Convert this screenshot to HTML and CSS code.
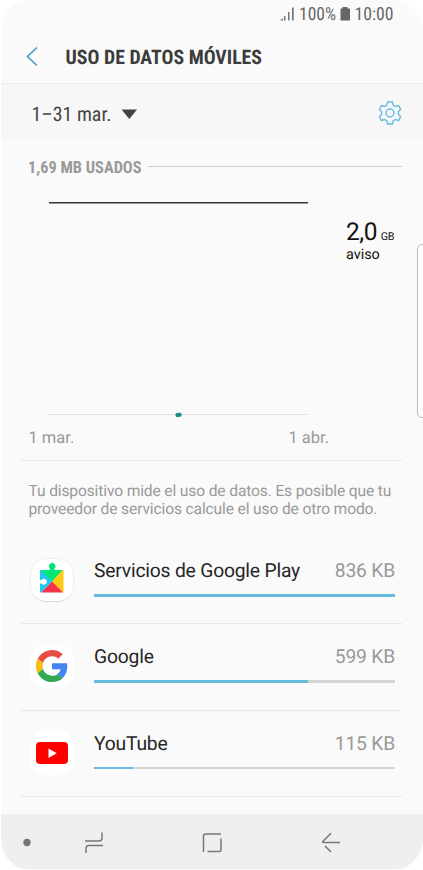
FILE: index.html
```html
<!DOCTYPE html>
<html lang="es">
<head>
<meta charset="utf-8">
<title>Uso de datos móviles</title>
<link rel="stylesheet" href="styles.css">
</head>
<body>
<main class="screen">
  <header class="top">
    <svg class="status" width="423" height="30">
      <path class="signal" d="M280 20.500l3-2.500v2.500zM284 16h1.500v4.500H284zM288 12h1.500v8.500H288zM292 7.500h1.700v13H292z"/>
      <text class="cond" x="299" y="20.300" textLength="37" lengthAdjust="spacingAndGlyphs">100%</text>
      <path class="battery" d="M340.500 8.500h2V7h5v1.500h2.500V20.500h-9.500z"/>
      <text class="cond" x="354.500" y="20.300" textLength="39" lengthAdjust="spacingAndGlyphs">10:00</text>
    </svg>
    <svg class="titlebar" width="423" height="53">
      <path class="back" d="M37 17.500L27.500 26.500L37 35.500"/>
      <text class="cond title" x="65.500" y="34" textLength="196.500" lengthAdjust="spacingAndGlyphs">USO DE DATOS MÓVILES</text>
    </svg>
  </header>
  <section class="period">
    <svg width="423" height="56">
      <text class="cond date" x="31.500" y="37" textLength="80" lengthAdjust="spacingAndGlyphs">1–31 mar.</text>
      <path class="caret" d="M121.500 25.500h15.500L129.300 35z"/>
      <g class="gear" transform="translate(390 29)">
        <circle r="4"/>
        <path d="M-2.500-11h5l.8 3.300 2.200 1.200 3.200-1 1.900 3.700-2.200 2.500v2.600l2.200 2.500-1.900 3.700-3.200-1-2.200 1.200-.8 3.300h-5l-.8-3.300-2.200-1.200-3.200 1-1.900-3.700 2.200-2.500v-2.600l-2.200-2.500 1.900-3.700 3.200 1 2.200-1.200z"/>
      </g>
    </svg>
  </section>
  <section class="usage">
    <div class="used">
      <svg width="120" height="24"><text class="cond" x="0" y="18.300" textLength="113.500" lengthAdjust="spacingAndGlyphs">1,69 MB USADOS</text></svg>
      <i></i>
    </div>
    <div class="chart">
      <svg class="plot" width="260" height="218">
        <path class="limit" d="M0 3.700h259"/>
        <path class="axis" d="M0 215.500h259"/>
        <rect class="point" x="126.500" y="213.800" width="6" height="4" rx="1.500" transform="rotate(-7 130 216)"/>
      </svg>
      <div class="warning"><div class="amount">2,0<small>GB</small></div><div>aviso</div></div>
    </div>
    <div class="dates"><span>1 mar.</span><span>1 abr.</span></div>
  </section>
  <p class="note">Tu dispositivo mide el uso de datos. Es posible que tu<br>proveedor de servicios calcule el uso de otro modo.</p>
  <ul class="apps">
    <li>
      <div class="icon outlined">
        <svg width="42" height="42" viewBox="0 0 42 42">
          <path fill="#00e676" d="M9 12.500q0-1.500 1.500-1.500h8.500V9.500a3.200 3.200 0 1 1 4.500 0V11H31q1.500 0 1.500 1.500L21 23z"/>
          <path fill="#ffca14" d="M31.500 11q1 0 1 1v20.500q0 1-1 1L21 22.500z"/>
          <path fill="#f43249" d="M32 33.500H10L21 22.500z"/>
          <path fill="#20c8ef" d="M10 11L21 22.500L10 33.500q-1 0-1-1V12q0-1 1-1z"/>
          <path fill="#fff" d="M8.500 20.900h2.100a2.900 2.900 0 1 1 0 3.700H8.500z"/>
        </svg>
      </div>
      <div class="info"><div class="line"><span class="long">Servicios de Google Play</span><b>836 KB</b></div><div class="bar"><i style="width:100%"></i></div></div>
    </li>
    <li>
      <div class="icon">
        <svg width="32" height="32" viewBox="0 0 48 48">
          <path fill="#e65044" d="M24 9.500c3.500 0 6.700 1.200 9.200 3.600l6.900-6.900C35.900 2.400 30.500 0 24 0 14.600 0 6.500 5.400 2.600 13.200l8 6.200C12.400 13.700 17.700 9.500 24 9.500z"/>
          <path fill="#4285f4" d="M47 24.500c0-1.600-.2-3.100-.4-4.500H24v9h12.900c-.6 3-2.300 5.500-4.800 7.200l7.700 6C44.400 38 47 31.800 47 24.500z"/>
          <path fill="#fbbc12" d="M10.500 28.600a14 14 0 0 1 0-9.200l-8-6.200a24 24 0 0 0 0 21.600z"/>
          <path fill="#34a853" d="M24 48c6.500 0 11.900-2.100 15.900-5.800l-7.700-6C30 37.700 27.200 38.500 24 38.500c-6.300 0-11.600-4.200-13.500-9.900l-8 6.200C6.500 42.600 14.600 48 24 48z"/>
        </svg>
      </div>
      <div class="info"><div class="line"><span>Google</span><b>599 KB</b></div><div class="bar"><i style="width:71.200%"></i></div></div>
    </li>
    <li>
      <div class="icon">
        <svg width="32" height="22" viewBox="0 0 32 22"><rect width="32" height="22" rx="4" fill="#f00"/><path fill="#fff" d="M12.500 6.500l8.300 4.700-8.300 4.700z"/></svg>
      </div>
      <div class="info"><div class="line"><span>YouTube</span><b>115 KB</b></div><div class="bar"><i style="width:13%"></i></div></div>
    </li>
  </ul>
  <nav class="nav">
    <svg width="423" height="56">
      <circle cx="27" cy="28.500" r="3.700"/>
      <path d="M85 27h14q3 0 3-3v-5.500M103 31.500H89q-3 0-3 3V39"/>
      <path d="M221 20h-15.500q-2 0-2 2v16M207.500 37.500H219q2 0 2-2V24.500"/>
      <path d="M340 28.500h-16.500q-1.500 0-.5-1.200l8-8M325 32l6 6"/>
    </svg>
  </nav>
  <div class="edge"></div>
</main>
</body>
</html>
```

FILE: styles.css
```css
* { box-sizing: border-box; }
body { margin: 0; background: #fff; font-family: Roboto, sans-serif; text-rendering: geometricPrecision; }
svg { display: block; flex-shrink: 0; }
.screen { position: relative; width: 423px; height: 870px; padding: 0 0 1px 0; background: #fafafa; border-radius: 31px; overflow: hidden; border-left: 1px solid #fff; display: flex; flex-direction: column; }
.top, .period, .nav { margin-left: -1px; }
.top { height: 84px; border-bottom: 1px solid #ececec; }
.cond { font-family: "Roboto Condensed", Roboto, sans-serif; font-stretch: condensed; }
.status text { font-size: 18px; fill: #666; }
.signal { fill: #777; }
.battery { fill: #666; }
.back { fill: none; stroke: #4c9fc2; stroke-width: 1.7; }
.title { font-size: 20px; font-weight: 700; fill: #3c3c3c; }
.period { height: 56px; background: #f7f7f7; }
.date { font-size: 20px; fill: #444; }
.caret { fill: #444; }
.gear { fill: none; stroke: #66bce0; stroke-width: 1.4; stroke-linejoin: round; }
.usage { height: 321px; margin: 0 21px 0 20px; padding-top: 15px; border-bottom: 1px solid #e8e8e8; }
.used { display: flex; padding-left: 7px; height: 24px; }
.used text { font-size: 16.8px; font-weight: 700; fill: #999; }
.used i { flex: 1; height: 1px; margin-top: 11px; background: #cfcfcf; }
.chart { display: flex; height: 239px; padding: 20px 0 0 28px; }
.limit { stroke: #333; stroke-width: 1.6; }
.axis { stroke: #e1e1e1; stroke-width: 1; }
.point { fill: #168e82; }
.warning { width: 60px; margin: 19px 0 0 37px; font-size: 14.4px; line-height: 16px; color: #111; }
.amount { font-size: 24.5px; line-height: 28px; height: 29px; white-space: nowrap; letter-spacing: -.4px; }
.amount small { font-size: 10.8px; letter-spacing: -.3px; margin-left: 3.5px; }
.dates { display: flex; justify-content: space-between; width: 308px; padding-left: 7.5px; font-size: 16.5px; line-height: 20px; color: #999; margin-top: 11px; }
.note { height: 77px; margin: 0; padding: 21px 0 0 27.5px; font-size: 15.6px; letter-spacing: -.14px; line-height: 18.3px; color: #999; white-space: nowrap; }
.apps { list-style: none; margin: 0 21px 0 20px; padding: 0; }
.apps li { display: flex; height: 86.3px; border-bottom: 1px solid #e8e8e8; padding: 20px 7px 0 8.5px; }
.icon { width: 44px; height: 44px; border-radius: 16px; background: #fff; display: flex; align-items: center; justify-content: center; }
.outlined { border: 1px solid #eee; border-bottom-color: #ddd; }
.info { flex: 1; margin-left: 20.5px; }
.line { display: flex; justify-content: space-between; font-size: 19.3px; letter-spacing: -.2px; line-height: 25px; color: #262626; white-space: nowrap; }
.line b { font-weight: 400; color: #999; }
.bar { height: 2.5px; margin-top: 11px; background: #d4d4d4; }
.bar i { display: block; height: 100%; background: #66bcdd; }
.nav { height: 55px; margin-top: auto; background: #efefef; }
.nav path { fill: none; stroke: #777; stroke-width: 1.5; }
.nav circle { fill: #777; }
.edge { position: absolute; top: 244px; right: -5px; width: 11px; height: 174px; background: #fff; border: 1px solid #bbb; border-radius: 5px 0 0 5px; }
```
